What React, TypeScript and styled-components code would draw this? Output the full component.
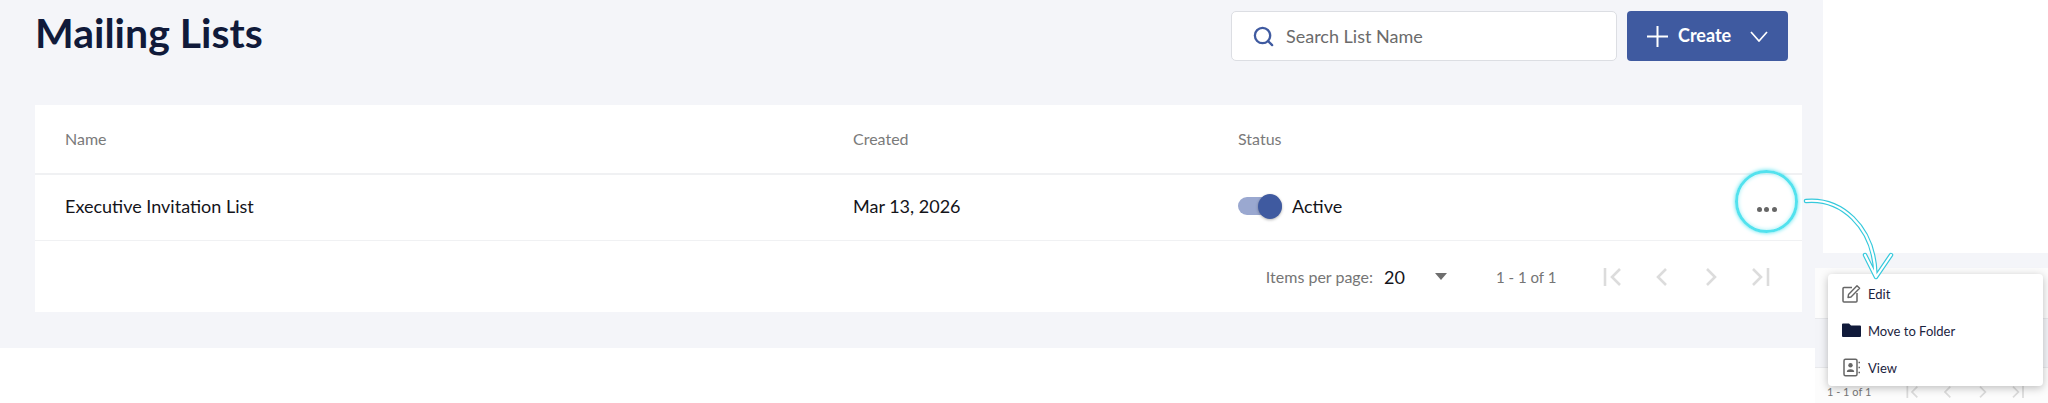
import React from 'react';
import styled, { createGlobalStyle } from 'styled-components';
import { Search } from 'lucide-react';

const GlobalStyle = createGlobalStyle`
  html, body {
    margin: 0;
    padding: 0;
    background: #fff;
    font-family: Lato, "Open Sans", sans-serif;
    overflow: hidden;
  }
`;

const Page = styled.div`
  position: relative;
  width: 2048px;
  height: 403px;
  overflow: hidden;
`;

const Main = styled.div`
  width: 1823px;
  height: 348px;
  box-sizing: border-box;
  background: #f4f5f9;
  padding: 0 21px 0 35px;
`;

const Header = styled.div`
  display: flex;
  align-items: flex-start;
  justify-content: space-between;
  height: 105px;
  padding-right: 14px;
`;

const Title = styled.h1`
  margin: 8px 0 0;
  font-size: 41px;
  line-height: 50px;
  font-weight: 700;
  color: #101a3a;
`;

const Actions = styled.div`
  display: flex;
  gap: 10px;
  margin-top: 11px;
`;

const SearchBox = styled.div`
  display: flex;
  align-items: center;
  gap: 11px;
  width: 386px;
  height: 50px;
  box-sizing: border-box;
  padding-left: 20px;
  background: #fff;
  border: 1px solid #dcdee3;
  border-radius: 5px;
  font-size: 18px;
  color: #6b6b6b;
  svg {
    color: #3f5aa0;
  }
`;

const CreateButton = styled.div`
  display: flex;
  align-items: center;
  width: 161px;
  height: 50px;
  box-sizing: border-box;
  padding-left: 20px;
  background: #3f5aa0;
  border-radius: 4px;
  color: #fff;
  font-size: 18px;
  font-weight: 700;
  span {
    width: 54px;
    margin: 0 18px 2px 10px;
  }
`;

const Card = styled.div`
  background: #fff;
  height: 207px;
`;

const Row = styled.div<{ $height: number; $border: number; $lift: number }>`
  display: grid;
  grid-template-columns: 788px 385px 1fr;
  align-items: center;
  height: ${p => p.$height}px;
  box-sizing: border-box;
  padding: 0 0 ${p => p.$lift}px 30px;
  border-bottom: ${p => p.$border}px solid #f0f1f3;
`;

const HeadCell = styled.div`
  font-size: 16px;
  color: #7a7a7a;
`;

const Cell = styled.div`
  display: flex;
  align-items: center;
  font-size: 18px;
  color: #14141a;
`;

const Toggle = styled.div`
  position: relative;
  width: 44px;
  height: 18px;
  margin-right: 10px;
  border-radius: 9px;
  background: #9aa8d0;
`;

const Knob = styled.div`
  position: absolute;
  right: 0;
  top: -3px;
  width: 24px;
  height: 25px;
  border-radius: 50%;
  background: #3f5aa0;
  box-shadow: 0 1px 3px rgba(0, 0, 0, 0.3);
`;

const Pager = styled.div`
  display: flex;
  align-items: center;
  justify-content: flex-end;
  height: 71px;
  padding-right: 31px;
  font-size: 16px;
  color: #757575;
`;

const PageSize = styled.span`
  width: 51px;
  margin-left: 11px;
  font-size: 18px;
  color: #14141a;
`;

const Caret = styled.span`
  width: 0;
  height: 0;
  margin-right: 49px;
  border-left: 6px solid transparent;
  border-right: 6px solid transparent;
  border-top: 7px solid #6e6e6e;
`;

const Range = styled.span`
  width: 104px;
  font-size: 15px;
`;

const PageIcons = styled.div<{ $gap: number; $size: number }>`
  display: flex;
  align-items: center;
  gap: ${p => p.$gap}px;
  svg {
    display: block;
    width: ${p => p.$size}px;
    height: auto;
  }
`;

/* second, faded screenshot behind the menu */
const BackShot = styled.div`
  position: absolute;
  left: 1815px;
  top: 268px;
  width: 233px;
  height: 135px;
  background: #fcfcfc;
`;

const BackBand = styled.div`
  height: 48px;
  margin-top: 50px;
  background: #f3f4f8;
  border-top: 1px solid #e8e9ec;
  border-bottom: 1px solid #e8e9ec;
`;

const BackPager = styled.div`
  position: absolute;
  left: 12px;
  top: 117px;
  display: flex;
  align-items: center;
  font-size: 11px;
  color: #777;
  span {
    width: 77px;
    white-space: nowrap;
  }
`;

const Strip = styled.div`
  position: absolute;
  left: 1823px;
  top: 253px;
  width: 225px;
  height: 15px;
  background: #f4f5f9;
`;

const Menu = styled.div`
  position: absolute;
  left: 1828px;
  top: 274px;
  width: 215px;
  height: 112px;
  padding: 1px 14px 0;
  box-sizing: border-box;
  display: flex;
  flex-direction: column;
  justify-content: space-around;
  background: #fff;
  border-radius: 4px;
  box-shadow: 0 2px 9px rgba(0, 0, 0, 0.25);
`;

const MenuItem = styled.div`
  display: flex;
  align-items: center;
  gap: 7px;
  font-size: 13px;
  color: #1b2340;
  svg {
    flex: none;
    width: 19px;
    height: 19px;
  }
`;

const Ring = styled.div`
  position: absolute;
  left: 1735px;
  top: 170px;
  width: 63px;
  height: 63px;
  box-sizing: border-box;
  display: flex;
  align-items: center;
  justify-content: center;
  border: 3px solid #52e2ee;
  border-radius: 50%;
  box-shadow: 0 0 4px #52e2ee, inset 0 0 4px #a0eef5;
`;

const Dots = styled.div`
  display: flex;
  gap: 2.5px;
  margin-top: 15px;
  i {
    width: 5px;
    height: 5px;
    border-radius: 50%;
    background: #666;
  }
`;

const Arrow = styled.svg`
  position: absolute;
  left: 1800px;
  top: 190px;
  overflow: visible;
`;

const arrowPath = 'M6 11 C40 8 74 35 75.5 85 M65 65 L76 87 L91 65';

const pageGlyphs = [
  { d: 'M20 1 L12 9 L20 17', bar: 5 },
  { d: 'M17 1 L9 9 L17 17' },
  { d: 'M9 1 L17 9 L9 17' },
  { d: 'M6 1 L14 9 L6 17', bar: 21 },
];

function PageGlyphs() {
  return (
    <>
      {pageGlyphs.map(g => (
        <svg key={g.d} viewBox="0 0 24 18">
          <path d={g.d} fill="none" stroke="#dcdcdc" strokeWidth="2.6" />
          {g.bar !== undefined && <path d={`M${g.bar} 0 V18`} stroke="#dcdcdc" strokeWidth="2.6" />}
        </svg>
      ))}
    </>
  );
}

export default function App() {
  return (
    <Page>
      <GlobalStyle />
      <Main>
        <Header>
          <Title>Mailing Lists</Title>
          <Actions>
            <SearchBox>
              <Search size={23} strokeWidth={2.4} />
              Search List Name
            </SearchBox>
            <CreateButton>
              <svg width="21" height="21" viewBox="0 0 21 21">
                <path d="M10.5 0 V21 M0 10.5 H21" stroke="#fff" strokeWidth="2" />
              </svg>
              <span>Create</span>
              <svg width="18" height="11" viewBox="0 0 18 11">
                <path d="M1 1 L9 10 L17 1" fill="none" stroke="#fff" strokeWidth="1.7" />
              </svg>
            </CreateButton>
          </Actions>
        </Header>
        <Card>
          <Row $height={70} $border={2} $lift={2}>
            <HeadCell>Name</HeadCell>
            <HeadCell>Created</HeadCell>
            <HeadCell>Status</HeadCell>
          </Row>
          <Row $height={66} $border={1} $lift={4}>
            <Cell>Executive Invitation List</Cell>
            <Cell>Mar 13, 2026</Cell>
            <Cell>
              <Toggle>
                <Knob />
              </Toggle>
              Active
            </Cell>
          </Row>
          <Pager>
            Items per page:
            <PageSize>20</PageSize>
            <Caret />
            <Range>1 - 1 of 1</Range>
            <PageIcons $gap={25} $size={24}>
              <PageGlyphs />
            </PageIcons>
          </Pager>
        </Card>
      </Main>
      <Strip />
      <BackShot>
        <BackBand />
        <BackPager>
          <span>1 - 1 of 1</span>
          <PageIcons $gap={19} $size={16}>
            <PageGlyphs />
          </PageIcons>
        </BackPager>
      </BackShot>
      <Ring>
        <Dots>
          <i />
          <i />
          <i />
        </Dots>
      </Ring>
      <Menu>
        <MenuItem>
          <svg viewBox="0 0 19 19">
            <path d="M10 3.5 H2 a1 1 0 0 0-1 1 V17 a1 1 0 0 0 1 1 H14 a1 1 0 0 0 1-1 V9" fill="none" stroke="#666" strokeWidth="1.5" />
            <path d="M6.5 10.5 L15 1.8 L17.6 4.3 L9 13 L6 13.5 Z" fill="none" stroke="#666" strokeWidth="1.4" strokeLinejoin="round" />
          </svg>
          Edit
        </MenuItem>
        <MenuItem>
          <svg viewBox="0 0 19 19">
            <path d="M0 3.5 a1 1 0 0 1 1-1 h6 l2 2 h9 a1 1 0 0 1 1 1 V15 a1 1 0 0 1-1 1 H1 a1 1 0 0 1-1-1 Z" fill="#101a3a" />
          </svg>
          Move to Folder
        </MenuItem>
        <MenuItem>
          <svg viewBox="0 0 19 19">
            <rect x="2" y="1.2" width="13" height="16.6" rx="1.5" fill="none" stroke="#666" strokeWidth="1.5" />
            <circle cx="8.5" cy="7.2" r="2.2" fill="#666" />
            <path d="M4.8 14 a3.7 2.8 0 0 1 7.4 0 Z" fill="#666" />
            <path d="M16.5 4.5 h1.5 M16.5 9.5 h1.5 M16.5 14.5 h1.5" stroke="#666" strokeWidth="1.5" />
          </svg>
          View
        </MenuItem>
      </Menu>
      <Arrow width="100" height="95">
        <path d={arrowPath} fill="none" stroke="#35c9dc" strokeWidth="4.5" strokeLinejoin="round" strokeLinecap="round" />
        <path d={arrowPath} fill="none" stroke="#fff" strokeWidth="2.2" strokeLinejoin="round" strokeLinecap="round" />
      </Arrow>
    </Page>
  );
}
